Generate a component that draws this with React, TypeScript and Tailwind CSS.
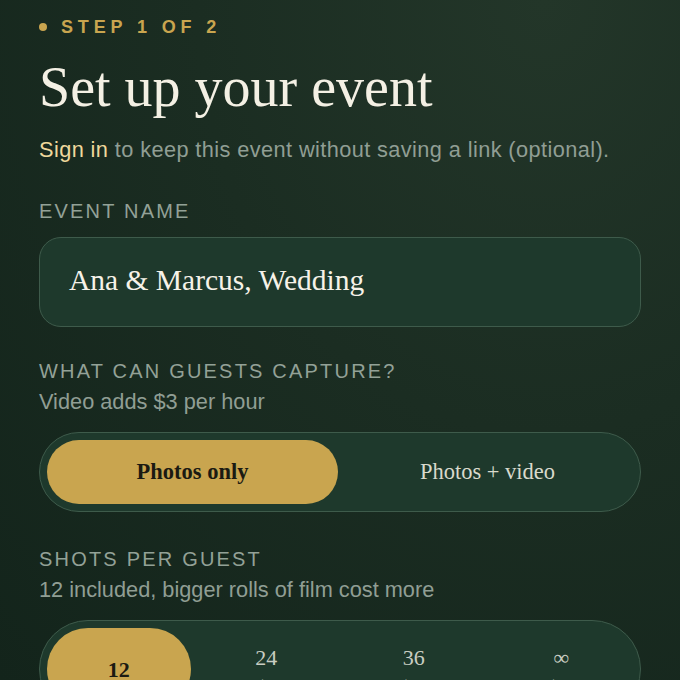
import React from "react";

const serif = "font-['Liberation_Serif',_'Times_New_Roman',_serif]";
const sans = "font-['Liberation_Sans',_Arial,_sans-serif]";

export default function App() {
  const shots = [
    { n: "12", p: "", active: true },
    { n: "24", p: "$8", active: false },
    { n: "36", p: "$15", active: false },
    { n: "∞", p: "$24", active: false },
  ];
  return (
    <div className="h-[680px] w-[680px] overflow-hidden bg-[radial-gradient(ellipse_at_80%_0%,_#233629_0%,_#1b2d22_45%,_#13241b_100%)]">
      <div className={`flex flex-col px-[39px] pt-[15px] ${sans}`}>
        <div className="flex h-6 items-center gap-[14px]">
          <span className="h-[8px] w-[8px] rounded-full bg-[#c9a54f]" />
          <span className="text-[18px] font-bold leading-6 tracking-[0.27em] text-[#c9a54f]">
            STEP 1 OF 2
          </span>
        </div>
        <h1 className={`${serif} mt-[16px] text-[56px] leading-[64px] text-[#f4f0e4]`}>
          Set up your event
        </h1>
        <p className="mt-[17px] text-[21.75px] leading-7 tracking-[0.4px] text-[#909e94]">
          <span className="text-[#efd89c]">Sign in</span> to keep this event without saving a link (optional).
        </p>
        <div className="mt-[35px] text-[20px] leading-6 tracking-[0.11em] text-[#93a197]">EVENT NAME</div>
        <div className="mt-[14px] flex h-[90px] items-center rounded-[22px] border border-[#3e5b4b] bg-[#1e392c] px-[29px] pb-[3px]">
          <span className={`${serif} text-[29.5px] text-[#f6f2e8]`}>Ana &amp; Marcus, Wedding</span>
        </div>
        <div className="mt-[32px] text-[20px] leading-6 tracking-[0.11em] text-[#93a197]">
          WHAT CAN GUESTS CAPTURE?
        </div>
        <div className="mt-[7px] text-[21.75px] leading-6 text-[#909e94]">Video adds $3 per hour</div>
        <div className="mt-[18px] grid h-[80px] grid-cols-2 gap-[4px] rounded-full border border-[#3e5b4b] bg-[#1e392c] p-[7px]">
          <div className={`${serif} flex items-center justify-center rounded-full bg-[#c9a54f] text-[22.5px] font-bold text-[#1b1a12]`}>
            Photos only
          </div>
          <div className={`${serif} flex items-center justify-center text-[22.5px] text-[#d9dacd]`}>
            Photos + video
          </div>
        </div>
        <div className="mt-[35px] text-[20px] leading-6 tracking-[0.11em] text-[#93a197]">SHOTS PER GUEST</div>
        <div className="mt-[7px] text-[21.75px] leading-6 text-[#909e94]">
          12 included, bigger rolls of film cost more
        </div>
        <div className="mt-[18px] grid h-[98px] grid-cols-4 gap-[4px] rounded-[50px] border border-[#3e5b4b] bg-[#1e392c] p-[7px]">
          {shots.map((s) =>
            s.active ? (
              <div
                key={s.n}
                className={`${serif} flex items-center justify-center rounded-[42px] bg-[#c9a54f] text-[22px] font-bold text-[#1b1a12]`}
              >
                {s.n}
              </div>
            ) : (
              <div key={s.n} className="flex flex-col items-center justify-center pt-[4px]">
                <span className={`${serif} text-[22px] leading-6 text-[#c9cdc2]`}>{s.n}</span>
                <span className="mt-[3px] text-[14px] leading-6 text-[#7f9085]">{s.p}</span>
              </div>
            )
          )}
        </div>
      </div>
    </div>
  );
}
